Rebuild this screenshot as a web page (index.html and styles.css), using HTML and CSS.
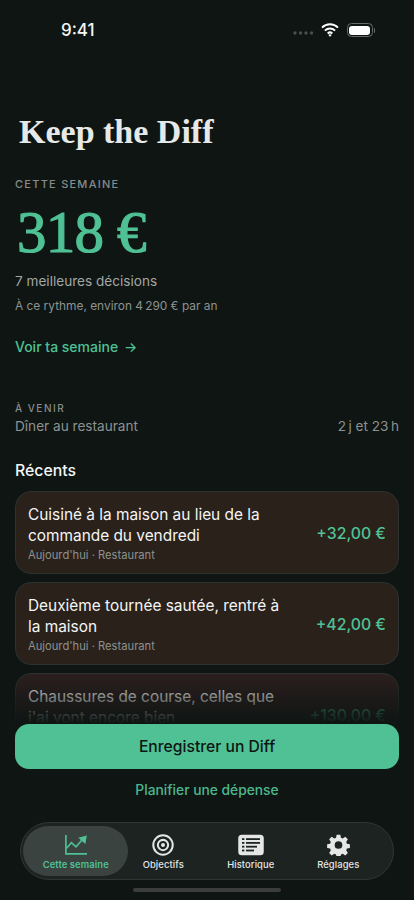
FILE: index.html
```html
<!DOCTYPE html>
<html lang="fr">
<head>
  <meta charset="UTF-8" />
  <meta name="viewport" content="width=device-width, initial-scale=1.0"/>
  <title>Keep the Diff</title>
  <link rel="stylesheet" href="styles.css">
</head>

<body>
<div class="screen">
  <!-- Status bar -->
  <div class="status-bar">
    <span class="status-time">9:41</span>
    <div class="status-icons">
      <svg class="status-dots" width="21" height="4" viewBox="0 0 21 4"><circle cx="2" cy="2" r="1.7"/><circle cx="7.5" cy="2" r="1.7"/><circle cx="13" cy="2" r="1.7"/><circle cx="18.5" cy="2" r="1.7"/></svg>
      <svg class="status-wifi" width="18" height="14" viewBox="0 0 18 14"><path d="M1 4.6a11.5 11.5 0 0 1 16 0" /><path d="M3.9 7.6a7.4 7.4 0 0 1 10.2 0" /><path d="M6.7 10.4a3.5 3.5 0 0 1 4.6 0" /><path class="wifi-dot" d="M9 13.8 7.3 11.9a2.6 2.6 0 0 1 3.4 0z"/></svg>
      <div class="battery"><div class="battery-fill"></div></div>
      <div class="battery-cap"></div>
    </div>
  </div>

  <main class="content">
    <h1 class="app-title">Keep the Diff</h1>

    <section class="week">
      <div class="eyebrow">CETTE SEMAINE</div>
      <div class="week-total">318 €</div>
      <div class="week-count">7 meilleures décisions</div>
      <div class="week-pace">À ce rythme, environ 4&#8239;290 € par an</div>
      <a class="week-link">Voir ta semaine <span class="arrow">→</span></a>
    </section>

    <section class="upcoming">
      <div class="eyebrow eyebrow-small">À VENIR</div>
      <div class="upcoming-row">
        <span>Dîner au restaurant</span>
        <span>2&#8239;j et 23&#8239;h</span>
      </div>
    </section>

    <h2 class="recent-title">Récents</h2>

    <div class="card">
      <div class="card-text">
        <div class="card-title">Cuisiné à la maison au lieu de la commande du vendredi</div>
        <div class="card-meta">Aujourd'hui · Restaurant</div>
      </div>
      <div class="card-amount">+32,00 €</div>
    </div>
    <div class="card">
      <div class="card-text">
        <div class="card-title">Deuxième tournée sautée, rentré à la maison</div>
        <div class="card-meta">Aujourd'hui · Restaurant</div>
      </div>
      <div class="card-amount">+42,00 €</div>
    </div>
    <div class="card card-last">
      <div class="card-text">
        <div class="card-title">Chaussures de course, celles que j'ai vont encore bien</div>
        <div class="card-meta">Hier · Achats</div>
      </div>
      <div class="card-amount">+130,00 €</div>
    </div>
  </main>

  <!-- Fixed bottom: actions and tab bar -->
  <div class="bottom">
    <div class="bottom-fade"></div>
    <div class="bottom-inner">
      <button class="primary-btn">Enregistrer un Diff</button>
      <div class="secondary-link">Planifier une dépense</div>

      <nav class="tab-bar">
        <div class="tab tab-active">
          <svg class="tab-icon" width="24" height="22" viewBox="0 0 26 24" fill="none" stroke="currentColor" stroke-width="1.8">
            <path d="M2 1v20.6h23"/>
            <path d="M2.6 15.5 8 9.5l5 4.5 6.5-7.5"/>
            <path d="M15.5 4 24.8 1.5 23.2 11z" fill="currentColor" stroke="none"/>
          </svg>
          <span>Cette semaine</span>
        </div>
        <div class="tab">
          <svg class="tab-icon" width="22" height="22" viewBox="0 0 24 24" fill="none" stroke="currentColor">
            <circle cx="12" cy="12" r="10.6" stroke-width="2.2"/>
            <circle cx="12" cy="12" r="5.6" stroke-width="2.2"/>
            <circle cx="12" cy="12" r="2.2" fill="currentColor" stroke="none"/>
          </svg>
          <span>Objectifs</span>
        </div>
        <div class="tab">
          <svg class="tab-icon" width="26" height="22" viewBox="0 0 26 22">
            <rect width="25.5" height="20.5" x="0.25" y="0.75" rx="3.5" fill="currentColor"/>
            <g fill="#1c2321">
              <rect x="4" y="4.2" width="2.4" height="1.8"/><rect x="8" y="4.2" width="14" height="1.8"/>
              <rect x="4" y="8" width="2.4" height="1.8"/><rect x="8" y="8" width="14" height="1.8"/>
              <rect x="4" y="11.8" width="2.4" height="1.8"/><rect x="8" y="11.8" width="11" height="1.8"/>
              <rect x="4" y="15.6" width="2.4" height="1.8"/><rect x="8" y="15.6" width="8" height="1.8"/>
            </g>
          </svg>
          <span>Historique</span>
        </div>
        <div class="tab">
          <svg class="tab-icon" width="23" height="22" viewBox="0 0 24 24">
            <path fill="currentColor" fill-rule="evenodd" d="M10 .8h4l.7 3.2 1.9.8 2.8-1.8 2.8 2.8-1.8 2.8.8 1.9 3.2.7v4l-3.2.7-.8 1.9 1.8 2.8-2.8 2.8-2.8-1.8-1.9.8-.7 3.2h-4l-.7-3.2-1.9-.8-2.8 1.8-2.8-2.8 1.8-2.8-.8-1.9-3.2-.7v-4l3.2-.7.8-1.9-1.8-2.8 2.8-2.8 2.8 1.8 1.9-.8zM12 7.8a4.2 4.2 0 1 0 0 8.4 4.2 4.2 0 0 0 0-8.4z"/>
          </svg>
          <span>Réglages</span>
        </div>
      </nav>
      <div class="home-indicator"></div>
    </div>
  </div>
</div>
</body>
</html>
```

FILE: styles.css
```css
/* Reset default margins */
html, body {
  margin: 0;
  padding: 0;
  background-color: #0e1513;
}

.screen {
  width: 414px;
  height: 900px;
  position: relative;
  overflow: hidden;
  background-color: #0e1513;
  font-family: Inter, "Liberation Sans", sans-serif;
  color: #fff;
}

/* Status bar */
.status-bar {
  height: 60px;
  display: flex;
  justify-content: space-between;
  align-items: center;
  padding: 0 39px 0 61px;
}
.status-time {
  font-size: 17px;
  font-weight: 500;
  color: #f4f5f5;
}
.status-icons {
  display: flex;
  align-items: center;
}
.status-dots {
  fill: #4a4e4d;
  margin: 5px 7px 0 0;
}
.status-wifi {
  fill: none;
  stroke: #fff;
  stroke-width: 2;
  margin-right: 8px;
}
.wifi-dot {
  fill: #fff;
  stroke: none;
}
.battery {
  width: 21px;
  height: 9px;
  border: 1px solid #666a69;
  border-radius: 4.5px;
  padding: 1.5px;
  box-sizing: content-box;
}
.battery-fill {
  width: 100%;
  height: 100%;
  background-color: #fff;
  border-radius: 3px;
}
.battery-cap {
  width: 1.5px;
  height: 5px;
  margin-left: 1px;
  background-color: #666a69;
  border-radius: 0 2px 2px 0;
}

/* Main scrolling content */
.content {
  padding: 0 15px;
}
.app-title {
  margin: 50px 0 0 4px;
  font-family: "Liberation Serif", serif;
  font-size: 34px;
  line-height: 44px;
  font-weight: 700;
  color: #e6e9e7;
}
.week {
  margin-top: 23px;
}
.eyebrow {
  font-size: 11px;
  line-height: 14px;
  font-weight: 500;
  letter-spacing: 1.25px;
  color: #868c8a;
}
.eyebrow-small {
  font-size: 10px;
  letter-spacing: 1.5px;
}
.week-total {
  margin: 9px 0 0 2px;
  font-family: "Liberation Serif", serif;
  font-size: 59px;
  line-height: 64px;
  letter-spacing: -0.8px;
  color: #4fc194;
  -webkit-text-stroke: 1.2px #4fc194;
}
.week-count {
  margin-top: 7px;
  font-size: 13.6px;
  line-height: 20px;
  color: #a2a7a5;
}
.week-pace {
  margin-top: 6px;
  font-size: 11.9px;
  line-height: 18px;
  color: #8d9290;
}
.week-link {
  display: block;
  margin-top: 22px;
  font-size: 14px;
  line-height: 20px;
  font-weight: 500;
  color: #4fc194;
}
.arrow {
  margin-left: 2px;
}
.upcoming {
  margin-top: 44px;
}
.upcoming-row {
  display: flex;
  justify-content: space-between;
  margin-top: 1px;
  font-size: 13.6px;
  line-height: 20px;
  color: #8d9290;
}
.recent-title {
  margin: 24px 0 9px;
  font-size: 15.8px;
  line-height: 22px;
  font-weight: 500;
  color: #f4f5f5;
}

/* Recent cards */
.card {
  display: flex;
  align-items: center;
  gap: 28px;
  box-sizing: border-box;
  height: 83px;
  margin-bottom: 8px;
  padding: 2px 12px 0 12px;
  background-color: #2a211b;
  border: 1px solid #2c3230;
  border-radius: 16px;
}
.card-last {
  background-color: #2c1f1f;
}
.card-text {
  flex: 1;
}
.card-title {
  font-size: 15.4px;
  line-height: 21px;
  color: #f4f5f5;
}
.card-meta {
  margin-top: 1.5px;
  font-size: 11.2px;
  line-height: 16px;
  color: #8d9290;
}
.card-amount {
  font-size: 15.8px;
  font-weight: 500;
  color: #4fc194;
  white-space: nowrap;
}

/* Bottom overlay */
.bottom {
  position: absolute;
  left: 0;
  right: 0;
  bottom: 0;
}
.bottom-fade {
  height: 52px;
  background: linear-gradient(to bottom, rgba(14, 21, 19, 0), #0e1513);
}
.bottom-inner {
  height: 176px;
  box-sizing: border-box;
  padding: 0 15px;
  background-color: #0e1513;
  display: flex;
  flex-direction: column;
  align-items: center;
}
.primary-btn {
  width: 100%;
  height: 45px;
  flex-shrink: 0;
  border: none;
  border-radius: 14px;
  background-color: #4fc194;
  color: #0e1513;
  font-family: inherit;
  font-size: 15.7px;
  font-weight: 500;
}
.secondary-link {
  margin-top: 12px;
  font-size: 13.8px;
  line-height: 18px;
  font-weight: 500;
  color: #4db78e;
}

/* Tab bar */
.tab-bar {
  width: 374px;
  height: 58px;
  flex-shrink: 0;
  box-sizing: border-box;
  margin-top: 23px;
  padding: 3px 11px;
  display: flex;
  background-color: #1c2321;
  border: 1px solid #2f3735;
  border-radius: 29px;
}
.tab {
  flex: 1 1 0;
  display: flex;
  flex-direction: column;
  align-items: center;
  justify-content: center;
  gap: 3px;
  padding-top: 2px;
  color: #e4e7e6;
  font-size: 9.4px;
  font-weight: 500;
  letter-spacing: 0.1px;
}
/* pill is wider than the tab slot */
.tab-active {
  flex: 0 0 105px;
  margin: 0 -8.75px;
  background-color: #3a4340;
  border-radius: 25px;
  color: #4fc194;
  font-weight: 600;
}
.tab-icon {
  height: 22px;
  flex-shrink: 0;
}
.home-indicator {
  width: 148px;
  height: 4px;
  flex-shrink: 0;
  margin-top: 8px;
  background-color: #3a3d3c;
  border-radius: 2px;
}
```
